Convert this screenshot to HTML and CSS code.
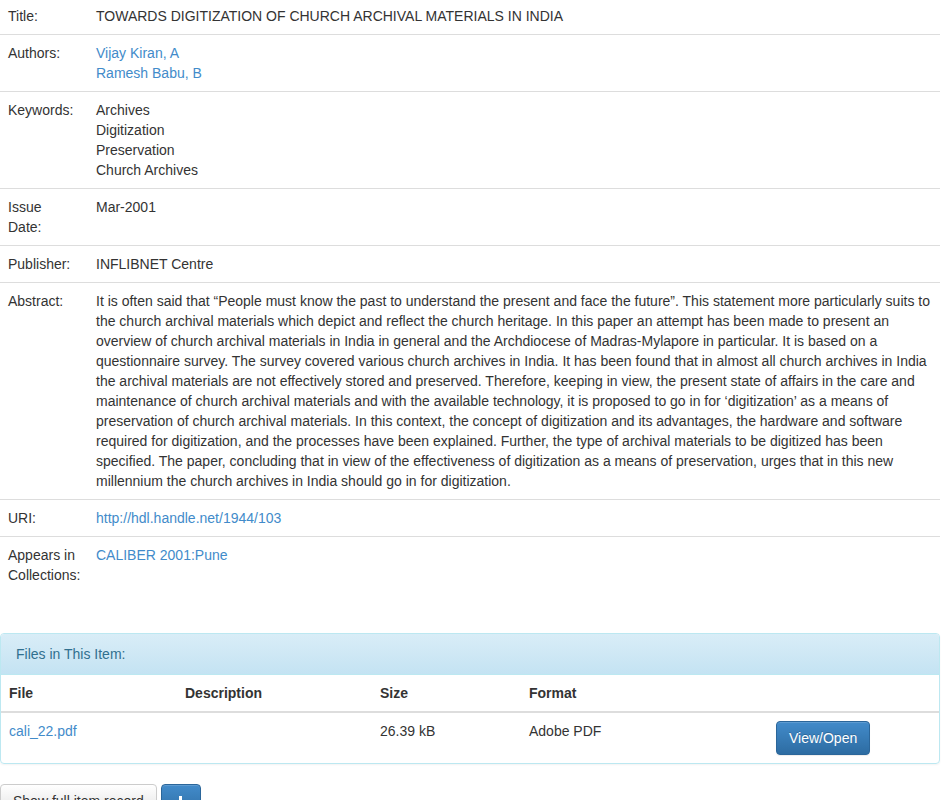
FILE: index.html
```html
<!DOCTYPE html>
<html lang="en">
<head>
    <meta charset="UTF-8">
    <meta name="viewport" content="width=device-width, initial-scale=1.0">
    <title>Towards Digitization of Church Archival Materials in India</title>
    <link rel="stylesheet" href="styles.css">
</head>
<body>
    <div class="container">
        <table class="table item-display">
            <colgroup>
                <col class="col-label">
                <col>
            </colgroup>
            <tr>
                <td class="field-label">Title:</td>
                <td class="field-value">TOWARDS DIGITIZATION OF CHURCH ARCHIVAL MATERIALS IN INDIA</td>
            </tr>
            <tr>
                <td class="field-label">Authors:</td>
                <td class="field-value">
                    <a href="#">Vijay Kiran, A</a><br>
                    <a href="#">Ramesh Babu, B</a>
                </td>
            </tr>
            <tr>
                <td class="field-label">Keywords:</td>
                <td class="field-value">Archives<br>Digitization<br>Preservation<br>Church Archives</td>
            </tr>
            <tr>
                <td class="field-label">Issue Date:</td>
                <td class="field-value">Mar-2001</td>
            </tr>
            <tr>
                <td class="field-label">Publisher:</td>
                <td class="field-value">INFLIBNET Centre</td>
            </tr>
            <tr>
                <td class="field-label">Abstract:</td>
                <td class="field-value">It is often said that &ldquo;People must know the past to understand the present and face the future&rdquo;. This statement more particularly suits to the church archival materials which depict and reflect the church heritage. In this paper an attempt has been made to present an overview of church archival materials in India in general and the Archdiocese of Madras-Mylapore in particular. It is based on a questionnaire survey. The survey covered various church archives in India. It has been found that in almost all church archives in India the archival materials are not effectively stored and preserved. Therefore, keeping in view, the present state of affairs in the care and maintenance of church archival materials and with the available technology, it is proposed to go in for &lsquo;digitization&rsquo; as a means of preservation of church archival materials. In this context, the concept of digitization and its advantages, the hardware and software required for digitization, and the processes have been explained. Further, the type of archival materials to be digitized has been specified. The paper, concluding that in view of the effectiveness of digitization as a means of preservation, urges that in this new millennium the church archives in India should go in for digitization.</td>
            </tr>
            <tr>
                <td class="field-label">URI:</td>
                <td class="field-value"><a href="#">http://hdl.handle.net/1944/103</a></td>
            </tr>
            <tr>
                <td class="field-label">Appears in Collections:</td>
                <td class="field-value"><a href="#">CALIBER 2001:Pune</a></td>
            </tr>
        </table>

        <div class="panel panel-info">
            <div class="panel-heading">Files in This Item:</div>
            <table class="table files-table">
                <colgroup>
                    <col class="col-file">
                    <col class="col-desc">
                    <col class="col-size">
                    <col class="col-format">
                    <col>
                </colgroup>
                <tr>
                    <th>File</th>
                    <th>Description</th>
                    <th>Size</th>
                    <th>Format</th>
                    <th></th>
                </tr>
                <tr>
                    <td><a href="#">cali_22.pdf</a></td>
                    <td></td>
                    <td>26.39 kB</td>
                    <td>Adobe PDF</td>
                    <td><a class="btn btn-primary" href="#">View/Open</a></td>
                </tr>
            </table>
        </div>

        <div class="item-actions">
            <a class="btn btn-default" href="#">Show full item record</a>
            <a class="btn btn-primary btn-icon" href="#">
                <svg width="14" height="14" viewBox="0 0 14 14">
                    <rect x="5" y="2" width="3" height="12" fill="#fff"/>
                    <rect x="9" y="6" width="3" height="8" fill="#fff"/>
                    <rect x="1" y="8" width="3" height="6" fill="#fff"/>
                </svg>
            </a>
        </div>
    </div>
</body>
</html>
```

FILE: styles.css
```css
body {
    margin: 0;
    font-family: "Liberation Sans", Arial, sans-serif;
    font-size: 14px;
    line-height: 20px;
    color: #333;
    background-color: #fff;
}

a {
    color: #428bca;
    text-decoration: none;
}

.container {
    width: 940px;
}

.table {
    width: 100%;
    border-collapse: collapse;
    border-spacing: 0;
}

.table td,
.table th {
    padding: 8px;
    vertical-align: top;
    text-align: left;
    border-top: 1px solid #ddd;
}

.item-display {
    table-layout: fixed;
    margin-top: -3px;
    margin-bottom: 40px;
}

.col-label {
    width: 88px;
}

.item-display .field-label {
    padding-right: 10px;
}

/* Files panel */
.panel {
    border: 1px solid #bce8f1;
    border-radius: 4px;
    margin-bottom: 20px;
    box-shadow: 0 1px 2px rgba(0, 0, 0, 0.05);
    overflow: hidden;
}

.panel-heading {
    padding: 10px 15px;
    color: #31708f;
    background-image: linear-gradient(to bottom, #d9edf7 0%, #c4e3f3 100%);
    border-bottom: 1px solid #bce8f1;
}

.files-table {
    table-layout: fixed;
}

.files-table tr:first-child th {
    border-top: 0;
    border-bottom: 2px solid #ddd;
}

.files-table th {
    font-weight: bold;
}

.col-file {
    width: 176px;
}

.col-desc {
    width: 195px;
}

.col-size {
    width: 149px;
}

.col-format {
    width: 247px;
}

/* Buttons */
.btn {
    display: inline-block;
    padding: 6px 12px;
    font-size: 14px;
    line-height: 20px;
    border: 1px solid transparent;
    border-radius: 4px;
    text-align: center;
    vertical-align: middle;
    box-shadow: inset 0 1px 0 rgba(255, 255, 255, 0.15), 0 1px 1px rgba(0, 0, 0, 0.075);
}

.btn-primary {
    color: #fff;
    text-shadow: 0 -1px 0 rgba(0, 0, 0, 0.2);
    background-image: linear-gradient(to bottom, #428bca 0%, #2d6ca2 100%);
    border-color: #2b669a;
}

.btn-default {
    color: #333;
    text-shadow: 0 1px 0 #fff;
    background-image: linear-gradient(to bottom, #fff 0%, #e0e0e0 100%);
    border-color: #ccc;
}

.item-actions {
    display: flex;
    gap: 4px;
}

.btn-icon {
    width: 14px;
    height: 20px;
    display: flex;
    align-items: center;
    justify-content: center;
}
```
